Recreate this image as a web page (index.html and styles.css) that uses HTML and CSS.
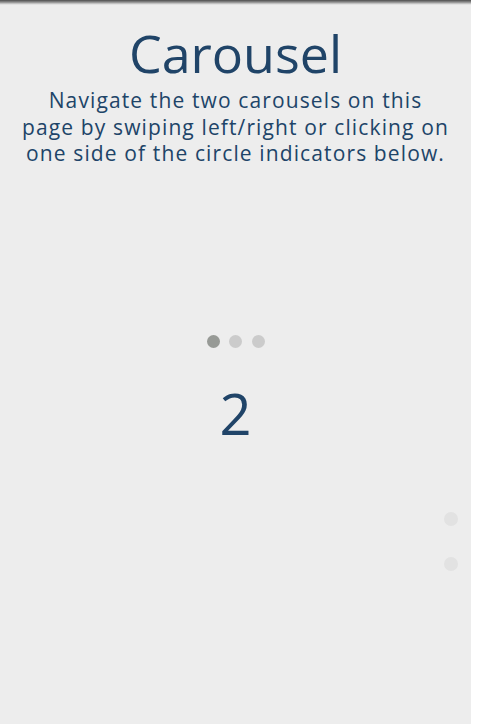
FILE: index.html
```html
<!DOCTYPE html>
<html>
<head>
<meta charset="utf-8">
<link rel="stylesheet" href="styles.css">
</head>
<body>
<div class="page">
  <div class="topshade"></div>
  <header class="intro">
    <h1 class="title">Carousel</h1>
    <p class="lead">Navigate the two carousels on this<br>page by swiping left/right or clicking on<br>one side of the circle indicators below.</p>
  </header>
  <section class="carousel">
    <div class="dots">
      <span class="dot active"></span>
      <span class="dot"></span>
      <span class="dot"></span>
    </div>
    <div class="slide">2</div>
  </section>
  <div class="side-dots">
    <span class="sdot"></span>
    <span class="sdot"></span>
  </div>
</div>
</body>
</html>
```

FILE: styles.css
```css
html, body {
  margin: 0;
  padding: 0;
  background: #ffffff;
}
.page {
  position: relative;
  width: 471px;
  height: 724px;
  background: #ededed;
  font-family: "Open Sans", "DejaVu Sans", sans-serif;
  color: #204468;
  overflow: hidden;
}
.topshade {
  height: 5px;
  background: linear-gradient(#4e4e4e 0px, #6a6a6a 1px, #9a9a9a 2.5px, #d5d5d5 4px, #ededed 5px);
}
.intro {
  text-align: center;
  padding: 0 10px;
}
.title {
  margin: 14px 0 0;
  font-size: 52px;
  font-weight: 400;
  line-height: 68px;
}
.lead {
  margin: 0;
  font-size: 21px;
  line-height: 26.5px;
  letter-spacing: 1.12px;
  white-space: nowrap;
}
.carousel {
  display: flex;
  flex-direction: column;
  align-items: center;
  margin-top: 168px;
}
.dots {
  display: flex;
  gap: 9.5px;
}
.dot {
  width: 13px;
  height: 13px;
  border-radius: 50%;
  background: #cbcbcb;
}
.dot.active {
  background: #979a96;
}
.slide {
  margin-top: 30px;
  font-size: 56px;
  line-height: 70px;
}
.side-dots {
  position: absolute;
  left: 444px;
  top: 512px;
  display: flex;
  flex-direction: column;
  gap: 31px;
}
.sdot {
  width: 14px;
  height: 14px;
  border-radius: 50%;
  background: #e2e2e2;
}
```
